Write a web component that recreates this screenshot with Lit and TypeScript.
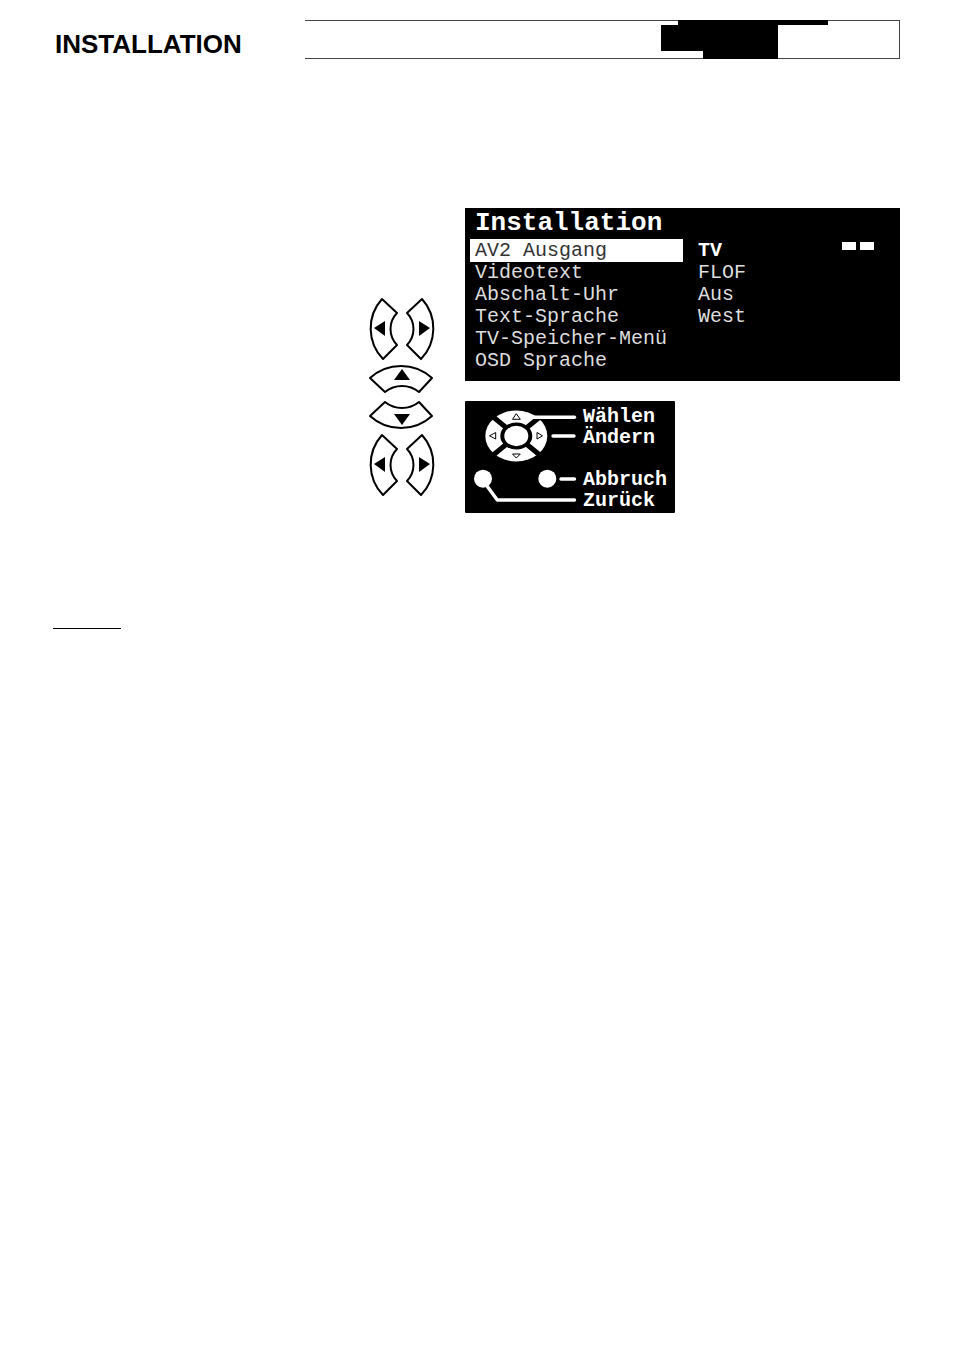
import { LitElement, html, css, svg } from "lit";
import { customElement, property } from "lit/decorators.js";

type Direction = "left" | "right" | "up" | "down";

const SIDE_SHAPE = svg`
  <path d="M13 2 L28 16 A23 23 0 0 0 28 48 L14 62 A44 44 0 0 1 13 2 Z"
    fill="#fff" stroke="#000" stroke-width="2" stroke-linejoin="round" />
  <path d="M5 31 L16 24 V39 Z" fill="#000" />`;

const FLAT_SHAPE = svg`
  <path d="M2 15 A46 46 0 0 1 64 15 L51 29 A27 27 0 0 0 17 29 Z"
    fill="#fff" stroke="#000" stroke-width="2" stroke-linejoin="round" />
  <path d="M34 6 L26 17 H42 Z" fill="#000" />`;

@customElement("arrow-key")
export class ArrowKey extends LitElement {
  @property() direction: Direction = "left";
  @property() label = "";

  static styles = css`
    :host { display: block; }
    .key { display: block; padding: 0; border: 0; background: none; cursor: pointer; }
    .glyph { display: block; overflow: visible; }
  `;

  render() {
    const side = this.direction === "left" || this.direction === "right";
    const w = side ? 30 : 68;
    const h = side ? 64 : 31;
    const flip =
      this.direction === "right" ? "translate(30 0) scale(-1 1)"
      : this.direction === "down" ? "translate(0 31) scale(1 -1)"
      : "";
    return html`
      <button class="key" type="button" aria-label=${this.label}>
        <svg class="glyph" width=${w} height=${h} viewBox="0 0 ${w} ${h}" aria-hidden="true">
          <g transform=${flip}>${side ? SIDE_SHAPE : FLAT_SHAPE}</g>
        </svg>
      </button>`;
  }
}

@customElement("osd-menu")
export class OsdMenu extends LitElement {
  private items = [
    { label: "AV2 Ausgang", value: "TV", active: true },
    { label: "Videotext", value: "FLOF" },
    { label: "Abschalt-Uhr", value: "Aus" },
    { label: "Text-Sprache", value: "West" },
    { label: "TV-Speicher-Menü", value: "" },
    { label: "OSD Sprache", value: "" },
  ];

  static styles = css`
    :host {
      display: block;
      background: #000;
      color: #fff;
      font-family: "Courier New", "Liberation Mono", monospace;
      padding: 0 0 9px 5px;
    }
    .title { margin: 0; padding-left: 5px; font-size: 26px; line-height: 31px; font-weight: 700; }
    .list { list-style: none; margin: 0; padding: 0; }
    .row {
      display: grid;
      grid-template-columns: 213px 1fr auto;
      column-gap: 15px;
      color: #ddd;
      font-size: 20px;
      line-height: 22px;
      padding-right: 26px;
    }
    .item {
      border: 0;
      margin: 0;
      padding: 0 0 0 5px;
      background: none;
      color: inherit;
      font: inherit;
      text-align: left;
      white-space: nowrap;
    }
    .active { line-height: 23px; }
    .active .item { background: #fff; color: #333; }
    .active .value { color: #fff; font-weight: 700; }
    .bars { display: flex; gap: 4px; padding-top: 3px; }
    .bar { width: 14px; height: 8px; background: #fff; }
  `;

  render() {
    return html`
      <h2 class="title">Installation</h2>
      <ul class="list">
        ${this.items.map(
          (i) => html`
            <li class="row ${i.active ? "active" : ""}">
              <button class="item" type="button">${i.label}</button>
              <span class="value">${i.value}</span>
              ${i.active
                ? html`<span class="bars"><span class="bar"></span><span class="bar"></span></span>`
                : null}
            </li>`
        )}
      </ul>`;
  }
}

@customElement("remote-legend")
export class RemoteLegend extends LitElement {
  static styles = css`
    :host {
      display: flex;
      box-sizing: border-box;
      width: 210px;
      background: #000;
      color: #fff;
      border-radius: 1px;
      font-family: "Courier New", "Liberation Mono", monospace;
    }
    .remote { display: block; flex: none; }
    .names {
      list-style: none;
      margin: 0;
      padding: 5px 0 0;
      font-size: 20px;
      line-height: 21px;
      font-weight: 700;
    }
    .apart { margin-top: 21px; }
  `;

  render() {
    return html`
      <svg class="remote" width="118" height="112" viewBox="1 0 118 112" aria-hidden="true">
        <ellipse cx="52.3" cy="35" rx="31" ry="25.5" fill="#fff" />
        <ellipse cx="52.3" cy="35" rx="16" ry="13.5" fill="#000" />
        <path d="M28 15 L77 55 M77 15 L28 55" stroke="#000" stroke-width="5" />
        <ellipse cx="52.3" cy="35" rx="12" ry="10.2" fill="#fff" />
        <g fill="#fff" stroke="#000" stroke-width="1">
          <path d="M52.3 12.7 L48.5 18.3 H56.3 Z" />
          <path d="M52.3 57 L48.5 53 H56.3 Z" />
          <path d="M25.5 34.8 L31.7 31.5 V38 Z" />
          <path d="M78.5 34.8 L73 31.5 V38 Z" />
        </g>
        <circle cx="19" cy="77.7" r="9" fill="#fff" />
        <circle cx="83.3" cy="77.7" r="9" fill="#fff" />
        <g fill="none" stroke="#fff" stroke-width="3.4" stroke-linecap="round" stroke-linejoin="round">
          <path d="M68 16.2 H110.5" />
          <path d="M89 35 H110" />
          <path d="M97 78 H110.5" />
          <path d="M21.5 83 L33.3 99 H110.5" />
        </g>
      </svg>
      <ul class="names">
        <li>Wählen</li>
        <li>Ändern</li>
        <li class="apart">Abbruch</li>
        <li>Zurück</li>
      </ul>`;
  }
}

@customElement("app-root")
export class AppRoot extends LitElement {
  static styles = css`
    :host {
      display: block;
      box-sizing: border-box;
      min-height: 100vh;
      padding: 20px 54px 40px 53px;
      background: #fff;
      color: #000;
      font-family: Arial, "Liberation Sans", sans-serif;
    }
    .header { display: flex; align-items: center; }
    .heading {
      flex: none;
      box-sizing: border-box;
      width: 252px;
      margin: 0;
      padding: 9px 0 0 2px;
      font-size: 26px;
      line-height: 30px;
      font-weight: 700;
    }
    .banner {
      flex: 1;
      display: flex;
      justify-content: flex-end;
      border: 1px solid #444;
      border-left: 0;
      padding-right: 71px;
    }
    .block { display: block; margin: -1px 0; }
    .figure {
      display: grid;
      grid-template-columns: 1fr 68px 435px;
      column-gap: 29px;
      margin-top: 149px;
    }
    .keys {
      grid-column: 2;
      display: flex;
      flex-direction: column;
      align-items: center;
      gap: 2px;
      padding-top: 89px;
    }
    .pair { display: flex; gap: 6px; }
    .stack { display: flex; flex-direction: column; gap: 6px; }
    .screens { display: flex; flex-direction: column; gap: 20px; }
    .rule { width: 68px; margin: 115px 0 0; border: 0; border-top: 1px solid #000; }
  `;

  render() {
    const pair = html`
      <div class="pair">
        <arrow-key direction="left" label="Links"></arrow-key>
        <arrow-key direction="right" label="Rechts"></arrow-key>
      </div>`;
    return html`
      <header class="header">
        <h1 class="heading">INSTALLATION</h1>
        <div class="banner">
          <svg class="block" width="167" height="39" viewBox="0 0 167 39" aria-hidden="true">
            <path d="M17 0 H167 V5 H117 V39 H42 V31 H0 V5 H17 Z" fill="#000" />
          </svg>
        </div>
      </header>
      <main>
        <section class="figure">
          <div class="keys">
            ${pair}
            <div class="stack">
              <arrow-key direction="up" label="Auf"></arrow-key>
              <arrow-key direction="down" label="Ab"></arrow-key>
            </div>
            ${pair}
          </div>
          <div class="screens">
            <osd-menu></osd-menu>
            <remote-legend></remote-legend>
          </div>
        </section>
        <hr class="rule" />
      </main>`;
  }
}
